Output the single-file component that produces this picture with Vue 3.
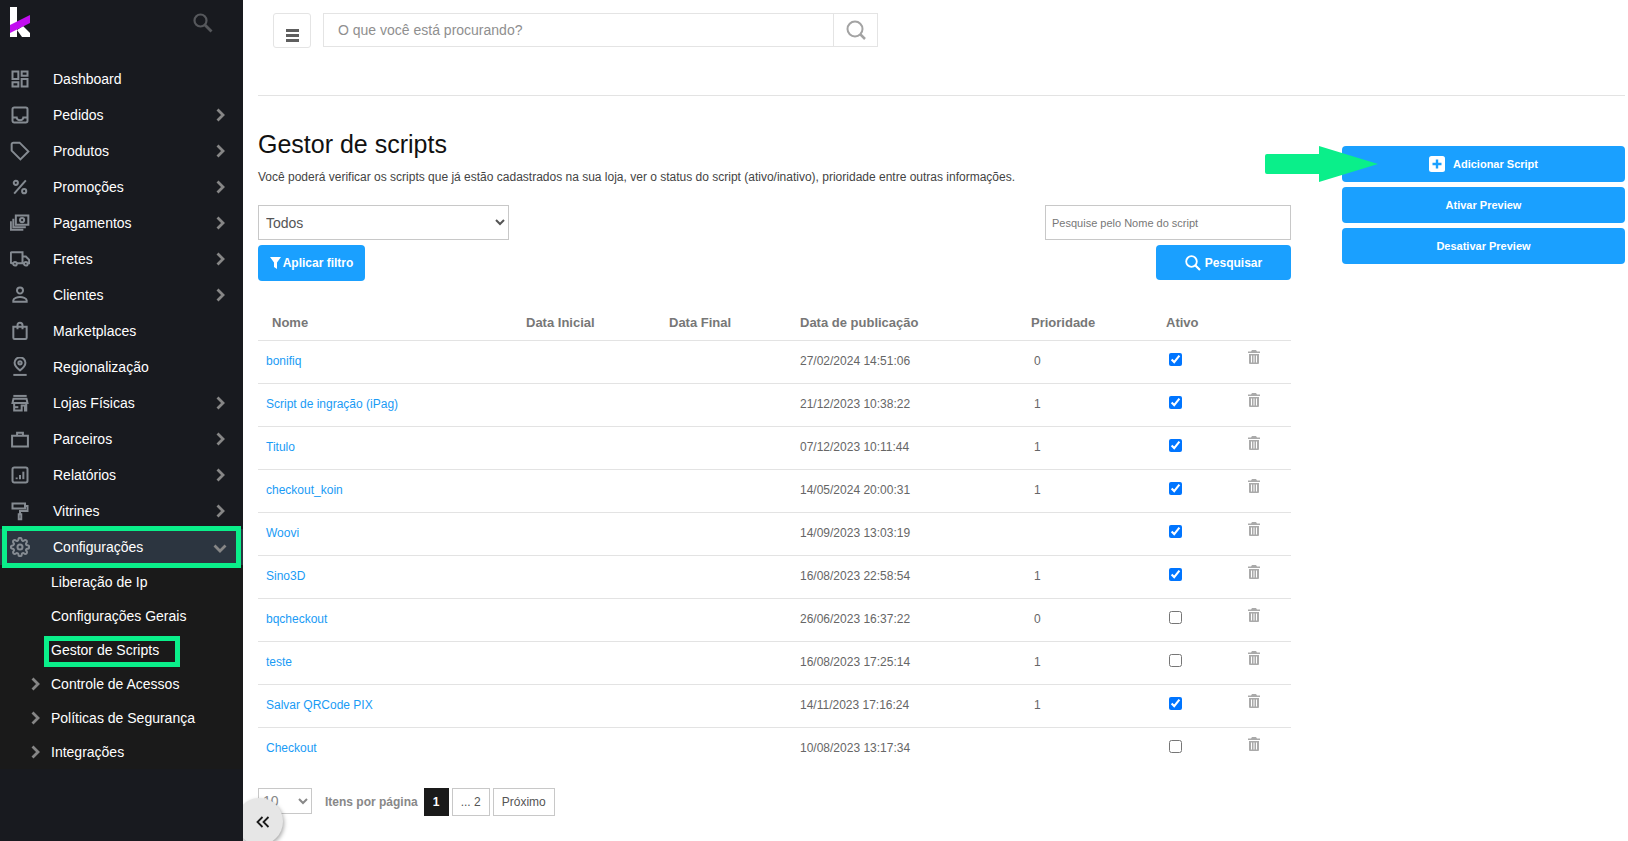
<script setup>
const gearPath = 'M19.4 15a1.65 1.65 0 0 0 .33 1.82l.06.06a2 2 0 0 1 0 2.83 2 2 0 0 1-2.83 0l-.06-.06a1.65 1.65 0 0 0-1.82-.33 1.65 1.65 0 0 0-1 1.51V21a2 2 0 0 1-2 2 2 2 0 0 1-2-2v-.09A1.65 1.65 0 0 0 9 19.4a1.65 1.65 0 0 0-1.82.33l-.06.06a2 2 0 0 1-2.83 0 2 2 0 0 1 0-2.83l.06-.06a1.65 1.65 0 0 0 .33-1.82 1.65 1.65 0 0 0-1.51-1H3a2 2 0 0 1-2-2 2 2 0 0 1 2-2h.09A1.65 1.65 0 0 0 4.6 9a1.65 1.65 0 0 0-.33-1.82l-.06-.06a2 2 0 0 1 0-2.83 2 2 0 0 1 2.83 0l.06.06a1.65 1.65 0 0 0 1.82.33H9a1.65 1.65 0 0 0 1-1.51V3a2 2 0 0 1 2-2 2 2 0 0 1 2 2v.09a1.65 1.65 0 0 0 1 1.51 1.65 1.65 0 0 0 1.82-.33l.06-.06a2 2 0 0 1 2.83 0 2 2 0 0 1 0 2.83l-.06.06a1.65 1.65 0 0 0-.33 1.82V9a1.65 1.65 0 0 0 1.51 1H21a2 2 0 0 1 2 2 2 2 0 0 1-2 2h-.09a1.65 1.65 0 0 0-1.51 1z'

const menu = [
  { label: 'Dashboard', icon: ['M3 3h7v9H3z', 'M14 3h7v5h-7z', 'M14 12h7v9h-7z', 'M3 16h7v5H3z'] },
  { label: 'Pedidos', arrow: true, icon: ['M5 3h14a2 2 0 0 1 2 2v14a2 2 0 0 1-2 2H5a2 2 0 0 1-2-2V5a2 2 0 0 1 2-2z', 'M3 15h5a4 3.4 0 0 0 8 0h5'] },
  { label: 'Produtos', arrow: true, icon: ['M2 4v7.5L12.5 22 22 12.5 11.5 2H4a2 2 0 0 0-2 2z', 'M6.5 6.5h.01'] },
  { label: 'Promoções', arrow: true, icon: ['M19 4L5 20', 'M7 4.5a2.5 2.5 0 1 0 0 5 2.5 2.5 0 0 0 0-5z', 'M17 14.5a2.5 2.5 0 1 0 0 5 2.5 2.5 0 0 0 0-5z'] },
  { label: 'Pagamentos', arrow: true, icon: ['M7 3h15v11H7z', 'M14.5 6a2.5 2.5 0 1 0 0 5 2.5 2.5 0 0 0 0-5z', 'M4 7v10h15', 'M1 10v10h15'] },
  { label: 'Fretes', arrow: true, icon: ['M4 17H2a1 1 0 0 1-1-1V5a1 1 0 0 1 1-1h13v13H8', 'M15 9h4l4 4v4h-2', 'M17 17h-2', 'M6 15.5a2.2 2.2 0 1 0 0 4.4 2.2 2.2 0 0 0 0-4.4z', 'M19 15.5a2.2 2.2 0 1 0 0 4.4 2.2 2.2 0 0 0 0-4.4z'] },
  { label: 'Clientes', arrow: true, icon: ['M12 3a3.6 3.6 0 1 0 0 7.2A3.6 3.6 0 0 0 12 3z', 'M4 20v-1.6c0-2.7 5-4 8-4s8 1.3 8 4V20z'] },
  { label: 'Marketplaces', icon: ['M4 7h16v13a1.5 1.5 0 0 1-1.5 1.5h-13A1.5 1.5 0 0 1 4 20z', 'M9 10V5a3 3 0 0 1 6 0v5'] },
  { label: 'Regionalização', icon: ['M12 16s-6.5-4.6-6.5-9a6.5 6.5 0 0 1 13 0c0 4.4-6.5 9-6.5 9z', 'M12 5a2 2 0 1 0 0 4 2 2 0 0 0 0-4z', 'M4 21.5h16'] },
  { label: 'Lojas Físicas', arrow: true, icon: ['M4 3.5h16', 'M3 12l1.2-5h15.6L21 12z', 'M5 12v9h9v-6h4v6h1.5V12', 'M5 17h5'] },
  { label: 'Parceiros', arrow: true, icon: ['M2.5 8h19v13h-19z', 'M8.5 8V4.5h7V8'] },
  { label: 'Relatórios', arrow: true, icon: ['M5 3h14a2 2 0 0 1 2 2v14a2 2 0 0 1-2 2H5a2 2 0 0 1-2-2V5a2 2 0 0 1 2-2z', 'M8 17v-2', 'M12 17v-5', 'M16 17V8'] },
  { label: 'Vitrines', arrow: true, icon: ['M3 3h15v6H3z', 'M18 6h3v6H12v4', 'M10.5 16h3v6h-3z'] }
]

const sub = ['Liberação de Ip', 'Configurações Gerais', 'Gestor de Scripts']
const subExpand = ['Controle de Acessos', 'Políticas de Segurança', 'Integrações']

const rows = [
  { name: 'bonifiq', date: '27/02/2024 14:51:06', prio: '0', on: true },
  { name: 'Script de ingração (iPag)', date: '21/12/2023 10:38:22', prio: '1', on: true },
  { name: 'Titulo', date: '07/12/2023 10:11:44', prio: '1', on: true },
  { name: 'checkout_koin', date: '14/05/2024 20:00:31', prio: '1', on: true },
  { name: 'Woovi', date: '14/09/2023 13:03:19', prio: '', on: true },
  { name: 'Sino3D', date: '16/08/2023 22:58:54', prio: '1', on: true },
  { name: 'bqcheckout', date: '26/06/2023 16:37:22', prio: '0', on: false },
  { name: 'teste', date: '16/08/2023 17:25:14', prio: '1', on: false },
  { name: 'Salvar QRCode PIX', date: '14/11/2023 17:16:24', prio: '1', on: true },
  { name: 'Checkout', date: '10/08/2023 13:17:34', prio: '', on: false }
]
</script>

<template>
  <div class="page">
    <aside class="sidebar">
      <div class="brand">
        <svg class="logo" width="20" height="30" viewBox="0 0 20 30">
          <path d="M0 0h7v30H0z" fill="#fff" />
          <path d="M7 23l6-4 7 7v4h-8z" fill="#fff" />
          <path d="M0 18L20 8v8L0 26z" fill="#c20df0" />
        </svg>
        <svg class="brand-search" width="20" height="20" viewBox="0 0 20 20" fill="none" stroke="#56585c" stroke-width="2.200">
          <circle cx="7.500" cy="7.500" r="6" />
          <path d="M12 12l6.500 6.500" stroke-width="2.800" />
        </svg>
      </div>

      <nav>
        <div v-for="item in menu" :key="item.label" class="nav-row">
          <svg class="nav-icon" viewBox="0 0 24 24">
            <path v-for="d in item.icon" :key="d" :d="d" />
          </svg>
          <span class="nav-label">{{ item.label }}</span>
          <svg v-if="item.arrow" class="chev" width="9" height="14" viewBox="0 0 9 14">
            <path d="M1.500 1.500L7 7l-5.500 5.500" />
          </svg>
        </div>

        <div class="nav-row active">
          <svg class="nav-icon" viewBox="0 0 24 24">
            <path d="M12 15a3 3 0 1 0 0-6 3 3 0 0 0 0 6z" />
            <path :d="gearPath" />
          </svg>
          <span class="nav-label">Configurações</span>
          <svg class="chev down" width="14" height="9" viewBox="0 0 14 9">
            <path d="M1.500 1.500L7 7l5.500-5.500" />
          </svg>
          <span class="mark-row"></span>
        </div>
      </nav>

      <div class="submenu">
        <div v-for="s in sub" :key="s" class="sub-row">
          <span>{{ s }}</span>
          <span v-if="s === 'Gestor de Scripts'" class="mark-sub"></span>
        </div>
        <div v-for="s in subExpand" :key="s" class="sub-row">
          <svg class="chev sub-chev" width="9" height="14" viewBox="0 0 9 14">
            <path d="M1.500 1.500L7 7l-5.500 5.500" />
          </svg>
          <span>{{ s }}</span>
        </div>
      </div>
    </aside>

    <main class="main">
      <header class="topbar">
        <button class="burger" type="button" aria-label="Menu">
          <span></span><span></span><span></span>
        </button>
        <div class="global-search">
          <input type="text" placeholder="O que você está procurando?" />
          <div class="global-search-btn">
            <svg width="22" height="20" viewBox="0 0 22 20" fill="none" stroke="#a3a3a3" stroke-width="2">
              <circle cx="10" cy="9" r="7.500" />
              <path d="M15.500 14.500l4.500 4.500" stroke-width="2.500" />
            </svg>
          </div>
        </div>
      </header>

      <div class="content">
        <section class="left">
          <h1>Gestor de scripts</h1>
          <p class="desc">Você poderá verificar os scripts que já estão cadastrados na sua loja, ver o status do script (ativo/inativo), prioridade entre outras informações.</p>

          <div class="filters">
            <div class="filter-col">
              <select class="filter-select">
                <option>Todos</option>
              </select>
              <button class="btn btn-filter" type="button">
                <svg width="11" height="12" viewBox="0 0 11 12"><path d="M0 0h11L7 5.500V12L4 10V5.500z" fill="#fff" /></svg>
                Aplicar filtro
              </button>
            </div>
            <div class="filter-col end">
              <input class="filter-input" type="text" placeholder="Pesquise pelo Nome do script" />
              <button class="btn btn-search" type="button">
                <svg width="16" height="16" viewBox="0 0 16 16" fill="none" stroke="#fff" stroke-width="1.800">
                  <circle cx="6.500" cy="6.500" r="5.300" />
                  <path d="M10.500 10.500L15 15" stroke-width="2.200" />
                </svg>
                Pesquisar
              </button>
            </div>
          </div>

          <div class="table">
            <div class="thead">
              <div class="th first">Nome</div>
              <div class="th">Data Inicial</div>
              <div class="th">Data Final</div>
              <div class="th">Data de publicação</div>
              <div class="th">Prioridade</div>
              <div class="th">Ativo</div>
              <div class="th"></div>
            </div>
            <div v-for="r in rows" :key="r.name" class="tr">
              <a class="td name">{{ r.name }}</a>
              <div class="td"></div>
              <div class="td"></div>
              <div class="td date">{{ r.date }}</div>
              <div class="td prio">{{ r.prio }}</div>
              <div class="td check"><input type="checkbox" :checked="r.on" /></div>
              <div class="td trash">
                <svg width="12" height="14" viewBox="0 0 12 14">
                  <path d="M4 0h4l1 1.500h3v1.500H0V1.500h3z" fill="#aaa" />
                  <path d="M1 4h10v9a1 1 0 0 1-1 1H2a1 1 0 0 1-1-1z" fill="#aaa" />
                  <path d="M3.500 5.500v7M6 5.500v7M8.500 5.500v7" stroke="#fff" stroke-width="1" />
                </svg>
              </div>
            </div>
          </div>

          <div class="pager">
            <select class="pager-select"><option>10</option></select>
            <span class="pager-label">Itens por página</span>
            <span class="page-box current">1</span>
            <span class="page-box">... 2</span>
            <span class="page-box">Próximo</span>
          </div>
        </section>

        <aside class="actions">
          <button class="action" type="button">
            <svg width="16" height="16" viewBox="0 0 16 16">
              <rect width="16" height="16" rx="2.500" fill="#fff" />
              <path d="M8 3.500v9M3.500 8h9" stroke="#1aa0ff" stroke-width="2.400" />
            </svg>
            Adicionar Script
          </button>
          <button class="action" type="button">Ativar Preview</button>
          <button class="action" type="button">Desativar Preview</button>
          <svg class="arrow" width="113" height="36" viewBox="0 0 113 36">
            <path d="M2 8h52V0l59 18-59 18v-8H2a2 2 0 0 1-2-2V10a2 2 0 0 1 2-2z" fill="#0aef8a" />
          </svg>
        </aside>
      </div>
    </main>

    <button class="collapse" type="button" aria-label="Recolher">
      <svg width="14" height="12" viewBox="0 0 14 12" fill="none" stroke="#1a1a1a" stroke-width="1.800">
        <path d="M6.500 1L1.500 6l5 5M12.500 1l-5 5 5 5" />
      </svg>
    </button>
  </div>
</template>

<style scoped>
.page {
  display: flex;
  width: 1628px;
  height: 841px;
  overflow: hidden;
  position: relative;
  background: #fff;
  font-family: "Liberation Sans", Arial, sans-serif;
}

.sidebar {
  width: 243px;
  flex: none;
  background: #181a1f;
  position: relative;
  z-index: 2;
}

.brand {
  height: 61px;
  box-sizing: border-box;
  display: flex;
  justify-content: space-between;
  align-items: flex-start;
  padding: 7px 30px 0 10px;
}

.brand-search {
  margin-top: 6px;
}

.nav-row {
  position: relative;
  height: 36px;
  display: flex;
  align-items: center;
  color: #fff;
  font-size: 14px;
}

.nav-icon {
  position: absolute;
  left: 10px;
  top: 8px;
  width: 20px;
  height: 20px;
  fill: none;
  stroke: #858b92;
  stroke-width: 2.400;
}

.nav-label {
  margin-left: 53px;
}

.chev {
  position: absolute;
  left: 216px;
  top: 11px;
  fill: none;
  stroke: #868686;
  stroke-width: 2.800;
}

.chev.down {
  left: 213px;
  top: 15px;
}

.active {
  background: #2c3540;
}

.mark-row {
  position: absolute;
  left: 2px;
  right: 2px;
  top: -3px;
  bottom: -3px;
  border: 5px solid #0aef8a;
}

.submenu {
  background: #1a1a1a;
}

.sub-row {
  position: relative;
  height: 34px;
  display: flex;
  align-items: center;
  padding-left: 51px;
  color: #fff;
  font-size: 14px;
}

.sub-chev {
  left: 31px;
  top: 10px;
}

.mark-sub {
  position: absolute;
  left: 44px;
  width: 136px;
  top: 3px;
  bottom: 0;
  box-sizing: border-box;
  border: 5px solid #0aef8a;
}

.main {
  flex: 1;
  min-width: 0;
  padding: 0 3px 0 15px;
}

.topbar {
  height: 96px;
  box-sizing: border-box;
  border-bottom: 1px solid #e3e3e3;
  display: flex;
  align-items: flex-start;
  gap: 12px;
  padding: 13px 0 0 15px;
}

.burger {
  width: 38px;
  height: 35px;
  box-sizing: border-box;
  background: #fff;
  border: 1px solid #e4e4e4;
  border-radius: 3px;
  display: flex;
  flex-direction: column;
  align-items: center;
  justify-content: center;
  gap: 2.500px;
  padding: 10px 0 0;
}

.burger span {
  width: 13px;
  height: 2.500px;
  background: #5f5f5f;
}

.global-search {
  width: 555px;
  height: 34px;
  box-sizing: border-box;
  border: 1px solid #e4e4e4;
  display: flex;
}

.global-search input {
  flex: 1;
  min-width: 0;
  border: 0;
  outline: 0;
  padding: 0 0 0 14px;
  font: 14px "Liberation Sans", Arial, sans-serif;
}

.global-search input::placeholder {
  color: #8f8f8f;
  opacity: 1;
}

.global-search-btn {
  width: 43px;
  border-left: 1px solid #e4e4e4;
  display: flex;
  align-items: center;
  justify-content: center;
}

.content {
  display: grid;
  grid-template-columns: 1033px 283px;
  column-gap: 51px;
}

.left {
  padding-top: 33px;
}

h1 {
  margin: 0;
  font-size: 25px;
  line-height: 30px;
  font-weight: 400;
  color: #111;
}

.desc {
  margin: 10px 0 0;
  font-size: 12px;
  line-height: 16px;
  color: #444;
}

.filters {
  margin-top: 20px;
  display: flex;
  justify-content: space-between;
}

.filter-col {
  display: flex;
  flex-direction: column;
  align-items: flex-start;
  gap: 5px;
}

.filter-col.end {
  align-items: flex-end;
}

.filter-select {
  width: 251px;
  height: 35px;
  box-sizing: border-box;
  border: 1px solid #c8c8c8;
  border-radius: 0;
  background: #fff;
  padding: 0 3px;
  color: #555;
  font: 14px "Liberation Sans", Arial, sans-serif;
}

.filter-input {
  width: 246px;
  height: 35px;
  box-sizing: border-box;
  border: 1px solid #c8c8c8;
  padding: 0 6px;
  font: 11px "Liberation Sans", Arial, sans-serif;
  outline: 0;
}

.filter-input::placeholder {
  color: #777;
  opacity: 1;
}

.btn {
  height: 35px;
  border: 0;
  border-radius: 4px;
  background: #1aa0ff;
  color: #fff;
  font: bold 12px "Liberation Sans", Arial, sans-serif;
  display: flex;
  align-items: center;
  justify-content: center;
  gap: 3px;
}

.btn-filter {
  width: 107px;
  height: 36px;
  gap: 2px;
}

.btn-search {
  width: 135px;
  gap: 4px;
}

.thead,
.tr {
  display: grid;
  grid-template-columns: 260px 143px 131px 231px 135px 82px 51px;
  border-bottom: 1px solid #e3e3e3;
}

.tr:last-child {
  border-bottom-color: transparent;
}

.thead {
  margin-top: 23px;
  height: 36px;
  align-items: center;
}

.th {
  padding-left: 8px;
  font-size: 13px;
  font-weight: bold;
  color: #777;
}

.th.first {
  padding-left: 14px;
}

.tr {
  height: 43px;
  box-sizing: border-box;
  padding-bottom: 2px;
  align-items: center;
  font-size: 12px;
  color: #666;
}

.td {
  padding-left: 8px;
}

.name {
  color: #1a9bf5;
}

.date {
  padding-left: 8px;
}

.prio {
  padding-left: 11px;
}

.check {
  padding-left: 11px;
  display: flex;
  align-items: center;
  margin-top: -4px;
}

.check input {
  margin: 0;
  width: 13px;
  height: 13px;
}

.trash {
  display: flex;
  margin-top: -8px;
}

.pager {
  margin-top: 17px;
  display: flex;
  align-items: flex-start;
  gap: 3px;
}

.pager-select {
  width: 54px;
  height: 26px;
  box-sizing: border-box;
  border: 1px solid #c8c8c8;
  border-radius: 0;
  background: #fff;
  color: #888;
  font: 14px "Liberation Sans", Arial, sans-serif;
}

.pager-label {
  margin: 0 3px 0 10px;
  line-height: 28px;
  font-size: 12px;
  font-weight: bold;
  color: #888;
}

.page-box {
  height: 28px;
  box-sizing: border-box;
  border: 1px solid #c8c8c8;
  padding: 0 8px;
  display: flex;
  align-items: center;
  font-size: 12px;
  color: #555;
}

.page-box.current {
  width: 25px;
  padding: 0;
  justify-content: center;
  background: #1a1a1a;
  border-color: #1a1a1a;
  color: #fff;
  font-weight: bold;
}

.actions {
  position: relative;
  padding-top: 50px;
  display: flex;
  flex-direction: column;
  gap: 5px;
}

.action {
  height: 36px;
  border: 0;
  border-radius: 4px;
  background: #1aa0ff;
  color: #fff;
  font: bold 11px "Liberation Sans", Arial, sans-serif;
  display: flex;
  align-items: center;
  justify-content: center;
  gap: 8px;
  padding: 0;
}

.arrow {
  position: absolute;
  left: -77px;
  top: 50px;
}

.collapse {
  position: absolute;
  left: 236px;
  top: 798px;
  width: 47px;
  height: 47px;
  border: 0;
  border-radius: 50%;
  background: #e6e6e6;
  box-shadow: 1px 2px 4px rgba(0, 0, 0, 0.35);
  z-index: 1;
  padding: 0 0 0 7px;
  display: flex;
  align-items: center;
  justify-content: center;
}
</style>

<style>
html, body { margin: 0; padding: 0; background: #fff; }
</style>
